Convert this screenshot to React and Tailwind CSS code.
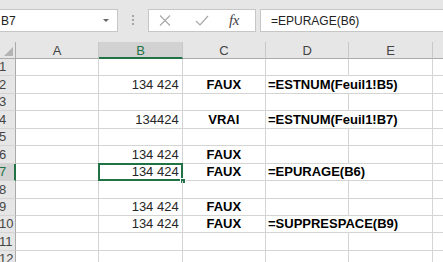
import React from 'react';

const rows = [
    { n: 1 },
    { n: 2, b: '134 424', c: 'FAUX', d: '=ESTNUM(Feuil1!B5)' },
    { n: 3 },
    { n: 4, b: '134424', c: 'VRAI', d: '=ESTNUM(Feuil1!B7)' },
    { n: 5 },
    { n: 6, b: '134 424', c: 'FAUX' },
    { n: 7, b: '134 424', c: 'FAUX', d: '=EPURAGE(B6)', sel: true },
    { n: 8 },
    { n: 9, b: '134 424', c: 'FAUX' },
    { n: 10, b: '134 424', c: 'FAUX', d: '=SUPPRESPACE(B9)' },
    { n: 11 },
    { n: 12 },
];

const cols = ['A', 'B', 'C', 'D', 'E'];

const FormulaBar = () => (
    <div className="h-[42px] bg-[#e6e6e6] flex items-start pt-[9px]">
        <div className="w-[118px] h-[23px] bg-white border border-l-0 border-[#c6c6c6] flex items-center justify-between pl-[1px] pr-[8px]">
            <span className="text-[12px] text-[#222] leading-none">B7</span>
            <span className="w-0 h-0 border-l-[3px] border-r-[3px] border-t-[3px] border-l-transparent border-r-transparent border-t-[#666]" />
        </div>
        <div className="ml-[14px] mt-[6px] flex flex-col gap-[2px]">
            <span className="w-[2px] h-[2px] bg-[#a6a6a6]" />
            <span className="w-[2px] h-[2px] bg-[#a6a6a6]" />
            <span className="w-[2px] h-[2px] bg-[#a6a6a6]" />
        </div>
        <div className="ml-[14px] w-[108px] h-[23px] bg-white border border-[#c6c6c6] flex items-center">
            <svg width="12" height="11" viewBox="0 0 12 11" className="ml-[10px]">
                <path d="M1 0.5 L11 10.5 M11 0.5 L1 10.5" stroke="#a8a8a8" strokeWidth="1.1" fill="none" />
            </svg>
            <svg width="14" height="11" viewBox="0 0 14 11" className="ml-[24px]">
                <path d="M1 6 L5 10 L13 1" stroke="#a8a8a8" strokeWidth="1.2" fill="none" />
            </svg>
            <span className="ml-[20px] text-[15px] italic text-[#444] font-['Liberation_Serif',serif] leading-none tracking-[-0.5px]">fx</span>
        </div>
        <div className="ml-[4px] flex-1 h-[23px] bg-white border border-r-0 border-[#c6c6c6] flex items-center pl-[10px]">
            <span className="text-[12px] text-[#222] leading-none">=EPURAGE(B6)</span>
        </div>
    </div>
);

const HeaderRow = () => (
    <div className="flex h-[17px] bg-[#e6e6e6]">
        <div className="w-[16px] shrink-0 border-r border-b border-[#ababab] relative">
            <svg width="9" height="9" viewBox="0 0 9 9" className="absolute right-[2px] bottom-[2px]">
                <path d="M9 0 L9 9 L0 9 Z" fill="#b4b4b4" />
            </svg>
        </div>
        {cols.map((c) => (
            <div
                key={c}
                className={`w-[83.33px] shrink-0 border-r border-[#c8c8c8] flex items-center justify-center pt-[1px] text-[13px] leading-none ${
                    c === 'B'
                        ? 'bg-[#d2d2d2] text-[#217346] border-b-2 border-b-[#217346]'
                        : 'text-[#444] border-b border-b-[#ababab]'
                }`}
            >
                {c}
            </div>
        ))}
        <div className="flex-1 border-b border-[#ababab]" />
    </div>
);

const Row = ({ row }) => (
    <div className="flex h-[17.45px] text-[13px] leading-[15px]">
        <div
            className={`w-[16px] shrink-0 border-b border-[#d4d4d4] flex items-end pb-[1px] overflow-hidden ${
                row.sel
                    ? 'bg-[#d2d2d2] text-[#217346] border-r-2 border-r-[#217346]'
                    : 'bg-[#e6e6e6] text-[#444] border-r border-r-[#ababab]'
            }`}
        >
            <span className="-ml-[1px]">{row.n}</span>
        </div>
        <div className="w-[83.33px] shrink-0 border-r border-b border-[#d4d4d4]" />
        <div className="w-[83.33px] shrink-0 border-r border-b border-[#d4d4d4] relative flex items-end justify-end pr-[3px] pb-[1px] text-[#262626]">
            {row.b}
            {row.sel && (
                <>
                    <div className="absolute -left-[1px] -top-[1px] -right-[1px] bottom-[-1px] border-2 border-[#217346]" />
                    <div className="absolute -right-[4px] -bottom-[4px] w-[6px] h-[6px] bg-[#217346] border border-white" />
                </>
            )}
        </div>
        <div className="w-[83.33px] shrink-0 border-r border-b border-[#d4d4d4] flex items-end justify-center pb-[1px] font-bold text-black">
            {row.c}
        </div>
        <div
            className={`w-[83.33px] shrink-0 border-b border-[#d4d4d4] flex items-end pl-[2px] pb-[1px] font-bold text-black whitespace-nowrap relative z-10 ${
                row.d ? '' : 'border-r'
            }`}
        >
            {row.d}
        </div>
        <div className="w-[83.33px] shrink-0 border-r border-b border-[#d4d4d4]" />
        <div className="flex-1 border-b border-[#d4d4d4]" />
    </div>
);

export default function App() {
    return (
        <div className="w-[443px] h-[262px] overflow-hidden bg-white font-['Liberation_Sans',Arial,sans-serif]">
            <FormulaBar />
            <HeaderRow />
            {rows.map((row) => (
                <Row key={row.n} row={row} />
            ))}
        </div>
    );
}
